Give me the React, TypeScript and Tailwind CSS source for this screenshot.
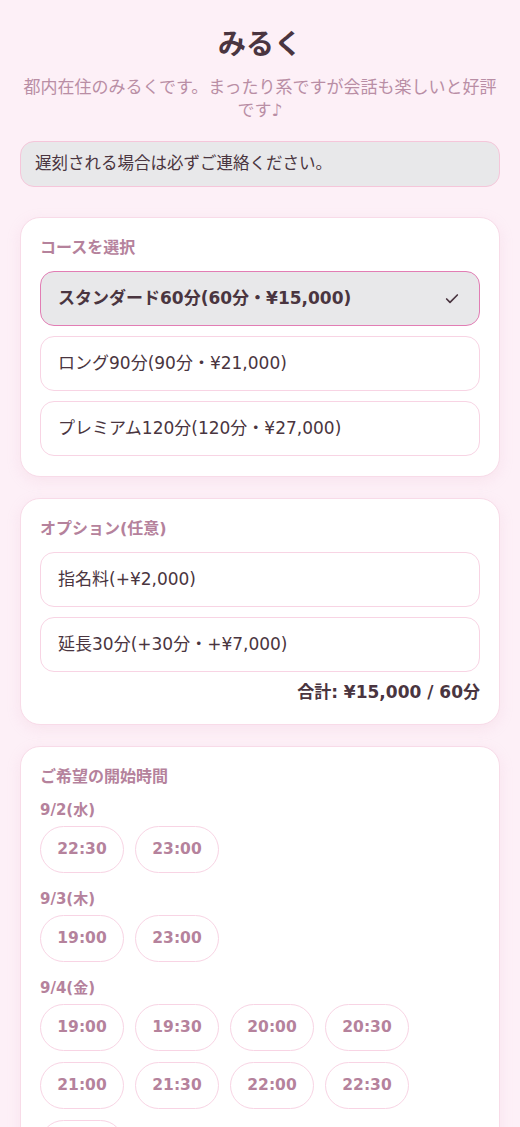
import { Check } from 'lucide-react';

const courses = [
  { label: 'スタンダード60分(60分・¥15,000)', selected: true },
  { label: 'ロング90分(90分・¥21,000)', selected: false },
  { label: 'プレミアム120分(120分・¥27,000)', selected: false },
];

const options = ['指名料(+¥2,000)', '延長30分(+30分・+¥7,000)'];

const slots = [
  { date: '9/2(水)', times: ['22:30', '23:00'] },
  { date: '9/3(木)', times: ['19:00', '23:00'] },
  { date: '9/4(金)', times: ['19:00', '19:30', '20:00', '20:30', '21:00', '21:30', '22:00', '22:30', '23:00'] },
];

export default function App() {
  return (
    <div
      className="min-h-screen bg-[#fdf0f7] px-5 pt-[26px] pb-10 text-[#4a3540]"
      style={{ fontFamily: '"DejaVu Sans", "Noto Sans CJK JP", sans-serif' }}
    >
      <h1 className="text-center text-[28px] font-bold leading-[38px]">みるく</h1>
      <p className="mt-[12px] text-center text-[17px] leading-[23px] text-[#b98ea5]">
        都内在住のみるくです。まったり系ですが会話も楽しいと好評です♪
      </p>

      <div className="mt-[19px] flex h-[46px] items-center rounded-[14px] border border-[#f5c6da] bg-[#e8e8ea] px-[14px] text-[16.5px]">
        遅刻される場合は必ずご連絡ください。
      </div>

      <section className="mt-[30px] rounded-[20px] border border-[#f8dbe8] bg-white px-[19px] py-5 shadow-[0_4px_14px_rgba(230,170,200,0.18)]">
        <h2 className="text-[16px] font-bold leading-[20px] text-[#b5829c]">コースを選択</h2>
        <div className="mt-[13px] flex flex-col gap-[10px]">
          {courses.map((c) => (
            <div
              key={c.label}
              className={`flex h-[55px] items-center justify-between rounded-[14px] border px-[17px] text-[17px] ${
                c.selected ? 'border-[#e27db4] bg-[#e8e8ea] font-bold' : 'border-[#f8d4e4] bg-white'
              }`}
            >
              <span>{c.label}</span>
              {c.selected && <Check size={16} strokeWidth={2.5} className="mr-[2px]" />}
            </div>
          ))}
        </div>
      </section>

      <section className="mt-[21px] rounded-[20px] border border-[#f8dbe8] bg-white px-[19px] py-5 shadow-[0_4px_14px_rgba(230,170,200,0.18)]">
        <h2 className="text-[16px] font-bold leading-[20px] text-[#b5829c]">オプション(任意)</h2>
        <div className="mt-[13px] flex flex-col gap-[10px]">
          {options.map((o) => (
            <div
              key={o}
              className="flex h-[55px] items-center rounded-[14px] border border-[#f8d4e4] bg-white px-[17px] text-[17px]"
            >
              {o}
            </div>
          ))}
        </div>
        <p className="mt-[8px] text-right text-[17px] font-bold leading-[24px]">合計: ¥15,000 / 60分</p>
      </section>

      <section className="mt-[21px] rounded-[20px] border border-[#f8dbe8] bg-white px-[19px] py-5 shadow-[0_4px_14px_rgba(230,170,200,0.18)]">
        <h2 className="text-[16px] font-bold leading-[20px] text-[#b5829c]">ご希望の開始時間</h2>
        {slots.map((s, idx) => (
          <div key={s.date} className={idx === 0 ? 'mt-[13px]' : 'mt-[16px]'}>
            <h3 className="text-[15px] font-bold leading-[20px] text-[#b5829c]">{s.date}</h3>
            <div className="mt-[6px] flex flex-wrap gap-[11px]">
              {s.times.map((t, i) => (
                <button
                  key={s.date + t + i}
                  className="flex h-[47px] w-[84px] items-center justify-center rounded-full border border-[#f8d4e4] bg-white text-[15.5px] font-bold text-[#b5829c]"
                >
                  {t}
                </button>
              ))}
            </div>
          </div>
        ))}
      </section>
    </div>
  );
}
